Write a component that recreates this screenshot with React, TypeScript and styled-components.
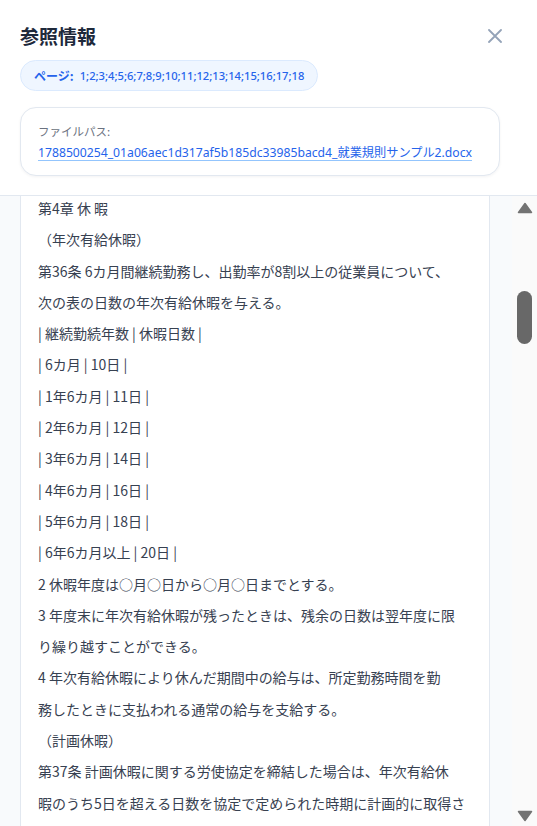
import React from 'react';
import styled, { createGlobalStyle } from 'styled-components';

const GlobalStyle = createGlobalStyle`
  html, body {
    margin: 0;
    padding: 0;
    background: #ffffff;
  }
  body {
    font-family: "Noto Sans", "Noto Sans CJK JP", sans-serif;
    color: #1e293b;
  }
`;

const Sheet = styled.div`
  display: flex;
  flex-direction: column;
  height: 100vh;
  background: #ffffff;
`;

const Header = styled.header`
  padding: 22px 37px 19px 20px;
  border-bottom: 1px solid #e2e8f0;
  display: flex;
  flex-direction: column;
  gap: 10px;
`;

const TitleRow = styled.div`
  display: flex;
  align-items: center;
  justify-content: space-between;
`;

const Title = styled.h2`
  margin: 0;
  font-family: "Noto Sans CJK JP", sans-serif;
  font-size: 19px;
  line-height: 28px;
  font-weight: 700;
  color: #1e293b;
`;

const CloseButton = styled.button`
  width: 16px;
  height: 16px;
  margin-right: -3px;
  padding: 0;
  border: 0;
  background: transparent;
  display: flex;
  align-items: center;
  justify-content: center;
  color: #94a3b8;
  cursor: pointer;
`;

const PageBadge = styled.div`
  align-self: flex-start;
  display: flex;
  align-items: center;
  gap: 6px;
  height: 31px;
  box-sizing: border-box;
  padding: 0 13px;
  border-radius: 999px;
  background: #eff6ff;
  border: 1px solid #dbeafe;
  color: #2563eb;
  font-family: "Noto Sans", "Noto Sans CJK JP", sans-serif;
  font-size: 11.2px;
  font-weight: 500;
`;

const BadgeLabel = styled.span`
  font-family: "Noto Sans CJK JP", sans-serif;
  font-size: 12px;
  font-weight: 700;
`;

const PathCard = styled.div`
  margin-top: 6px;
  padding: 14px 17px 12px;
  border: 1px solid #e2e8f0;
  border-radius: 16px;
  background: #ffffff;
  box-shadow: 0 1px 3px rgba(15, 23, 42, 0.05);
  display: flex;
  flex-direction: column;
  gap: 3px;
`;

const PathLabel = styled.div`
  font-family: "Noto Sans CJK JP", sans-serif;
  font-size: 11.5px;
  line-height: 18px;
  color: #6b7280;
`;

const PathLink = styled.a`
  font-family: "Noto Sans", "Noto Sans CJK JP", sans-serif;
  font-size: 12.2px;
  line-height: 20px;
  color: #2563eb;
  text-decoration: underline;
  text-decoration-color: #93c5fd;
  text-underline-offset: 3px;
  white-space: nowrap;
`;

const ScrollArea = styled.div`
  flex: 1;
  min-height: 0;
  display: flex;
  background: #f8fafc;
`;

const Viewport = styled.div`
  flex: 1;
  overflow: hidden;
`;

const DocPanel = styled.div`
  width: 470px;
  box-sizing: border-box;
  margin: -3px 0 0 20px;
  padding: 0 16px 16px 17px;
  background: #ffffff;
  border: 1px solid #e2e8f0;
  border-top: 0;
`;

const DocLine = styled.p`
  margin: 0;
  font-family: "Noto Sans CJK JP", sans-serif;
  font-size: 14px;
  line-height: 31.3px;
  color: #374151;
  white-space: nowrap;
`;

const Track = styled.div`
  width: 25px;
  display: flex;
  flex-direction: column;
  align-items: center;
  background: #fafafa;
  padding: 6px 0 4px;
  box-sizing: border-box;
`;

const Thumb = styled.div`
  width: 15px;
  height: 53px;
  border-radius: 8px;
  background: #686868;
`;

const Spacer = styled.div`
  flex: 1;
`;

const Arrow = ({ down }: { down?: boolean }) => (
  <svg width="16" height="12" viewBox="0 0 16 12">
    <polygon
      points={down ? '1.5,1.5 14.5,1.5 8,10.5' : '8,1.5 14.5,10.5 1.5,10.5'}
      fill="#737373"
      stroke="#737373"
      strokeWidth="1.5"
      strokeLinejoin="round"
    />
  </svg>
);

const CloseIcon = () => (
  <svg width="14" height="14" viewBox="0 0 14 14" fill="none">
    <path d="M1 1L13 13M13 1L1 13" stroke="currentColor" strokeWidth="1.8" strokeLinecap="round" />
  </svg>
);

// each entry is one paragraph, split into the lines it wraps to
const paragraphs: string[][] = [
  ['第4章 休 暇'],
  ['（年次有給休暇）'],
  ['第36条 6カ月間継続勤務し、出勤率が8割以上の従業員について、', '次の表の日数の年次有給休暇を与える。'],
  ['| 継続勤続年数 | 休暇日数 |'],
  ['| 6カ月 | 10日 |'],
  ['| 1年6カ月 | 11日 |'],
  ['| 2年6カ月 | 12日 |'],
  ['| 3年6カ月 | 14日 |'],
  ['| 4年6カ月 | 16日 |'],
  ['| 5年6カ月 | 18日 |'],
  ['| 6年6カ月以上 | 20日 |'],
  ['2 休暇年度は○月○日から○月○日までとする。'],
  ['3 年度末に年次有給休暇が残ったときは、残余の日数は翌年度に限', 'り繰り越すことができる。'],
  ['4 年次有給休暇により休んだ期間中の給与は、所定勤務時間を勤', '務したときに支払われる通常の給与を支給する。'],
  ['（計画休暇）'],
  [
    '第37条 計画休暇に関する労使協定を締結した場合は、年次有給休',
    '暇のうち5日を超える日数を協定で定められた時期に計画的に取得さ',
  ],
];

const pages = Array.from({ length: 18 }, (_, i) => i + 1).join(';');

// scroll position of the document, as a share of the track
const scrollShare = 0.128;

export default function App() {
  return (
    <>
      <GlobalStyle />
      <Sheet>
        <Header>
          <TitleRow>
            <Title>参照情報</Title>
            <CloseButton aria-label="閉じる">
              <CloseIcon />
            </CloseButton>
          </TitleRow>
          <PageBadge>
            <BadgeLabel>ページ:</BadgeLabel>
            <span>{pages}</span>
          </PageBadge>
          <PathCard>
            <PathLabel>ファイルパス:</PathLabel>
            <PathLink href="#">1788500254_01a06aec1d317af5b185dc33985bacd4_就業規則サンプル2.docx</PathLink>
          </PathCard>
        </Header>
        <ScrollArea>
          <Viewport>
            <DocPanel>
              {paragraphs.map((lines, i) => (
                <DocLine key={i}>
                  {lines.map((l, j) => (
                    <React.Fragment key={j}>
                      {j > 0 && <br />}
                      {l}
                    </React.Fragment>
                  ))}
                </DocLine>
              ))}
            </DocPanel>
          </Viewport>
          <Track>
            <Arrow />
            <Thumb style={{ marginTop: `${Math.round(scrollShare * 600)}px` }} />
            <Spacer />
            <Arrow down />
          </Track>
        </ScrollArea>
      </Sheet>
    </>
  );
}
